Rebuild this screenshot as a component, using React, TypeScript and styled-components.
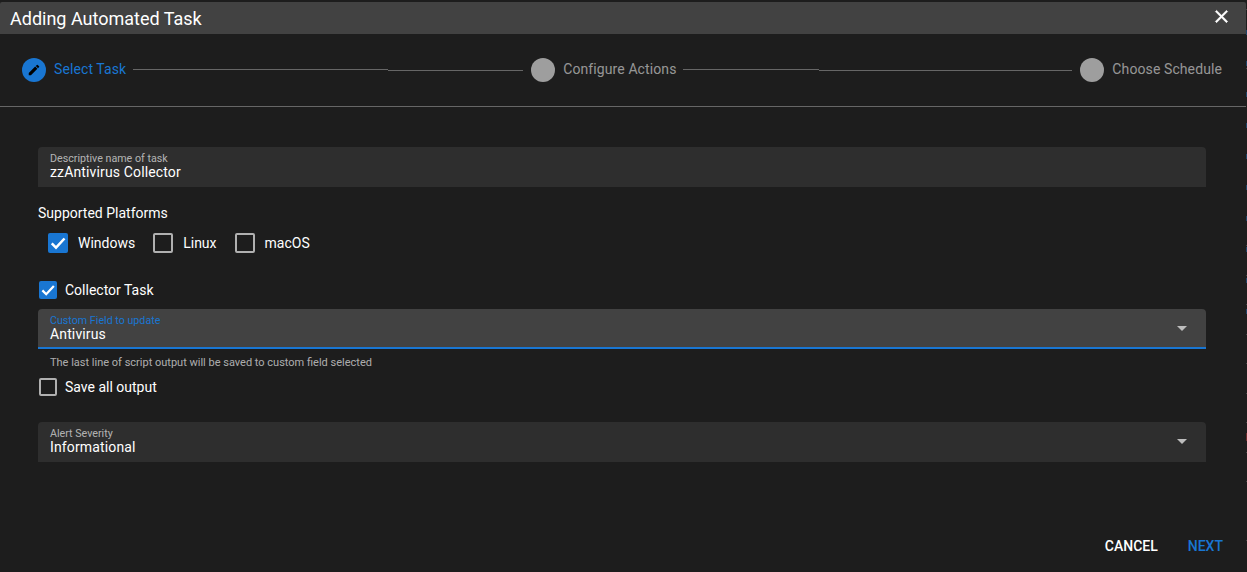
import React from 'react';
import styled, {createGlobalStyle} from 'styled-components';

const Global = createGlobalStyle`
  html, body {
    margin: 0;
    padding: 0;
    height: 100%;
    overflow: hidden;
    background: #1d1d1d;
  }
  body {
    font-family: Roboto, "Liberation Sans", sans-serif;
    color: #fff;
  }
`;

const PencilIcon = () => (
    <svg width="14" height="14" viewBox="0 0 24 24" fill="#000">
        <path d="M3 17.25V21h3.75L17.81 9.94l-3.75-3.75L3 17.25zM20.71 7.04a1 1 0 0 0 0-1.41l-2.34-2.34a1 1 0 0 0-1.41 0l-1.83 1.83 3.75 3.75 1.83-1.83z"/>
    </svg>
);

const CloseIcon = () => (
    <svg width="21" height="21" viewBox="0 0 24 24" fill="#fff" stroke="#fff" strokeWidth="0.7">
        <path d="M19 6.41 17.59 5 12 10.59 6.41 5 5 6.41 10.59 12 5 17.59 6.41 19 12 13.41 17.59 19 19 17.59 13.41 12z"/>
    </svg>
);

const CheckIcon = () => (
    <svg width="100%" height="100%" viewBox="0 0 24 24" fill="none" stroke="#fff" strokeWidth="3">
        <path d="M4.5 12.5 9.6 17.6 19.8 6.6"/>
    </svg>
);

const Step = ({label, active, children}: {label: string; active?: boolean; children?: React.ReactNode}) => (
    <StepItem>
        <StepDot active={active}>{children}</StepDot>
        <StepLabel active={active}>{label}</StepLabel>
    </StepItem>
);

const Connector = ({first, second}: {first: number; second: number}) => (
    <ConnectorWrap total={first + second}>
        <ConnectorPart grow={first} />
        <ConnectorPart grow={second} lower />
    </ConnectorWrap>
);

const Check = ({label, checked, large}: {label: string; checked?: boolean; large?: boolean}) => (
    <CheckRow large={large}>
        <CheckBox checked={checked} large={large}>{checked && <CheckIcon />}</CheckBox>
        <CheckLabel>{label}</CheckLabel>
    </CheckRow>
);

const App = () => {
    return (
        <Page>
            <Global />
            <Dialog>
                <TitleBar>
                    <Title>Adding Automated Task</Title>
                    <CloseButton><CloseIcon /></CloseButton>
                </TitleBar>
                <Stepper>
                    <Step label="Select Task" active><PencilIcon /></Step>
                    <Connector first={254} second={135} />
                    <Step label="Configure Actions" />
                    <Connector first={135} second={253} />
                    <Step label="Choose Schedule" />
                </Stepper>
                <Form>
                    <Field>
                        <FieldText>
                            <FieldLabel>Descriptive name of task</FieldLabel>
                            <FieldValue>zzAntivirus Collector</FieldValue>
                        </FieldText>
                    </Field>
                    <GroupTitle>Supported Platforms</GroupTitle>
                    <PlatformRow>
                        <Check label="Windows" checked large />
                        <Check label="Linux" large />
                        <Check label="macOS" large />
                    </PlatformRow>
                    <CollectorRow>
                        <Check label="Collector Task" checked />
                    </CollectorRow>
                    <Field focused>
                        <FieldText>
                            <FieldLabel focused>Custom Field to update</FieldLabel>
                            <FieldValue>Antivirus</FieldValue>
                        </FieldText>
                        <Caret />
                    </Field>
                    <Hint>The last line of script output will be saved to custom field selected</Hint>
                    <SaveRow>
                        <Check label="Save all output" />
                    </SaveRow>
                    <Field>
                        <FieldText>
                            <FieldLabel>Alert Severity</FieldLabel>
                            <FieldValue>Informational</FieldValue>
                        </FieldText>
                        <Caret />
                    </Field>
                </Form>
                <Actions>
                    <ActionButton>CANCEL</ActionButton>
                    <ActionButton primary>NEXT</ActionButton>
                </Actions>
            </Dialog>
            <PageEdge />
        </Page>
    );
};

const Page = styled.div`
  display: flex;
  width: 1247px;
  height: 572px;
`;

// the page behind the dialog shows through as a 1px column on the right
const PageEdge = styled.div`
  width: 1px;
  flex: none;
  background:
    linear-gradient(#6a2a2a, #6a2a2a) 0 433px / 1px 8px no-repeat,
    repeating-linear-gradient(#1c4468 0 5px, transparent 5px 31px) 0 30px / 1px 290px no-repeat,
    repeating-linear-gradient(#1d1d1d 0 9px, #444 9px 10px, #1d1d1d 10px 29.5px);
`;

const Dialog = styled.div`
  width: 1246px;
  height: 572px;
  flex: none;
  box-sizing: border-box;
  padding-top: 2px;
  display: flex;
  flex-direction: column;
  background: #1d1d1d;
`;

const TitleBar = styled.div`
  height: 32px;
  flex: none;
  display: flex;
  align-items: center;
  justify-content: space-between;
  padding: 0 14px 0 10px;
  background: #424242;
  border-radius: 2px 2px 0 0;
`;

const Title = styled.div`
  font-size: 18px;
  font-weight: 450;
  color: #fff;
`;

const CloseButton = styled.div`
  display: flex;
  width: 21px;
  height: 21px;
  margin-top: -3px;
`;

const Stepper = styled.div`
  height: 73px;
  flex: none;
  box-sizing: border-box;
  display: flex;
  align-items: center;
  padding: 0 24px 0 22px;
  border-bottom: 1px solid #666;
`;

const StepItem = styled.div`
  display: flex;
  align-items: center;
  flex: none;
`;

const StepDot = styled.div<{active?: boolean}>`
  width: 24px;
  height: 24px;
  border-radius: 50%;
  display: flex;
  align-items: center;
  justify-content: center;
  background: ${(props) => props.active ? `#1976d2` : `#9e9e9e`};
`;

const StepLabel = styled.div<{active?: boolean}>`
  margin-left: 8px;
  margin-top: -2px;
  font-size: 14px;
  line-height: 20px;
  letter-spacing: 0.1px;
  color: ${(props) => props.active ? `#1976d2` : `rgba(255,255,255,.55)`};
`;

const ConnectorWrap = styled.div<{total: number}>`
  flex: ${(props) => props.total} 1 0;
  display: flex;
  height: 2px;
  margin: 0 8px 0 7px;
`;

const ConnectorPart = styled.div<{grow: number; lower?: boolean}>`
  height: 1px;
  background: #666;
  flex: ${(props) => props.grow} 1 0;
  margin-top: ${(props) => props.lower ? `1px` : `0`};
`;

const Form = styled.div`
  flex: 1;
  display: flex;
  flex-direction: column;
  padding: 40px 40px 0 38px;
`;

const Field = styled.div<{focused?: boolean}>`
  height: 40px;
  flex: none;
  box-sizing: border-box;
  display: flex;
  align-items: center;
  padding: 0 19px 0 12px;
  border-radius: 4px 4px 0 0;
  background: ${(props) => props.focused ? `#424242` : `#2e2e2e`};
  border-bottom: 2px solid ${(props) => props.focused ? `#1976d2` : `transparent`};
`;

const FieldText = styled.div`
  flex: 1;
  display: flex;
  flex-direction: column;
`;

const FieldLabel = styled.div<{focused?: boolean}>`
  font-size: 10.7px;
  line-height: 11px;
  color: ${(props) => props.focused ? `#1976d2` : `rgba(255,255,255,.65)`};
`;

const FieldValue = styled.div`
  font-size: 14px;
  line-height: 16px;
  font-weight: 450;
  letter-spacing: 0.14px;
  color: #fff;
`;

const Caret = styled.div`
  width: 0;
  height: 0;
  border-left: 5px solid transparent;
  border-right: 5px solid transparent;
  border-top: 5px solid #bdbdbd;
`;

const GroupTitle = styled.div`
  margin-top: 18px;
  font-size: 14px;
  line-height: 16px;
  font-weight: 450;
  color: #fff;
`;

const PlatformRow = styled.div`
  margin-top: 12px;
  padding-left: 10px;
  display: flex;
  gap: 18px;
`;

const CollectorRow = styled.div`
  margin-top: 27px;
  margin-bottom: 9px;
`;

const SaveRow = styled.div`
  margin-top: 7px;
  margin-bottom: 25px;
`;

const CheckRow = styled.div<{large?: boolean}>`
  display: flex;
  align-items: center;
  gap: ${(props) => props.large ? `10px` : `8px`};
  padding-left: ${(props) => props.large ? `0` : `1px`};
`;

const CheckBox = styled.div<{checked?: boolean; large?: boolean}>`
  width: ${(props) => props.large ? `20px` : `18px`};
  height: ${(props) => props.large ? `20px` : `18px`};
  box-sizing: border-box;
  border-radius: 2px;
  background: ${(props) => props.checked ? `#1976d2` : `transparent`};
  border: ${(props) => props.checked ? `none` : `2px solid #b0b0b0`};
`;

const CheckLabel = styled.div`
  font-size: 14px;
  line-height: 20px;
  font-weight: 450;
  color: #fff;
`;

const Hint = styled.div`
  margin-top: 7px;
  padding-left: 12px;
  font-size: 11px;
  line-height: 14px;
  color: rgba(255,255,255,.65);
`;

const Actions = styled.div`
  height: 56px;
  flex: none;
  box-sizing: border-box;
  display: flex;
  justify-content: flex-end;
  align-items: center;
  gap: 30px;
  padding: 4px 23px 0 0;
`;

const ActionButton = styled.div<{primary?: boolean}>`
  font-size: 14px;
  font-weight: 500;
  color: ${(props) => props.primary ? `#1976d2` : `#fff`};
`;

export default App;
